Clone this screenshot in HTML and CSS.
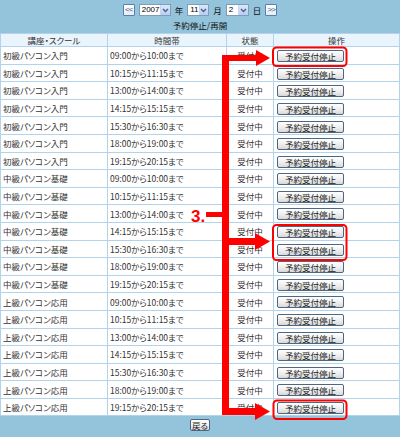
FILE: index.html
```html
<!DOCTYPE html>
<html lang="ja">
<head>
<meta charset="utf-8">
<title>予約停止/再開</title>
<link rel="stylesheet" href="styles.css">
</head>
<body>
<div class="page">
  <div class="nav">
    <span class="navbtn">&lt;&lt;</span>
    <span class="sel w1"><span class="val">2007</span><span class="drop"><svg width="7" height="5" viewBox="0 0 7 5"><path d="M1 1 L3.5 3.5 L6 1" fill="none" stroke="#4d6185" stroke-width="1.4"/></svg></span></span>
    <span class="lbl">年</span>
    <span class="sel w2"><span class="val">11</span><span class="drop"><svg width="7" height="5" viewBox="0 0 7 5"><path d="M1 1 L3.5 3.5 L6 1" fill="none" stroke="#4d6185" stroke-width="1.4"/></svg></span></span>
    <span class="lbl">月</span>
    <span class="sel w3"><span class="val">2</span><span class="drop"><svg width="7" height="5" viewBox="0 0 7 5"><path d="M1 1 L3.5 3.5 L6 1" fill="none" stroke="#4d6185" stroke-width="1.4"/></svg></span></span>
    <span class="lbl">日</span>
    <span class="navbtn">&gt;&gt;</span>
  </div>
  <div class="title">予約停止/再開</div>
  <table class="grid">
    <colgroup>
      <col class="c1"><col class="c2"><col class="c3"><col class="c4">
    </colgroup>
    <thead>
      <tr><th>講座・スクール</th><th>時間帯</th><th>状態</th><th>操作</th></tr>
    </thead>
    <tbody>
      <tr><td>初級パソコン入門</td><td>09:00から10:00まで</td><td class="st">受付中</td><td><span class="btn">予約受付停止</span></td></tr>
      <tr><td>初級パソコン入門</td><td>10:15から11:15まで</td><td class="st">受付中</td><td><span class="btn">予約受付停止</span></td></tr>
      <tr><td>初級パソコン入門</td><td>13:00から14:00まで</td><td class="st">受付中</td><td><span class="btn">予約受付停止</span></td></tr>
      <tr><td>初級パソコン入門</td><td>14:15から15:15まで</td><td class="st">受付中</td><td><span class="btn">予約受付停止</span></td></tr>
      <tr><td>初級パソコン入門</td><td>15:30から16:30まで</td><td class="st">受付中</td><td><span class="btn">予約受付停止</span></td></tr>
      <tr><td>初級パソコン入門</td><td>18:00から19:00まで</td><td class="st">受付中</td><td><span class="btn">予約受付停止</span></td></tr>
      <tr><td>初級パソコン入門</td><td>19:15から20:15まで</td><td class="st">受付中</td><td><span class="btn">予約受付停止</span></td></tr>
      <tr><td>中級パソコン基礎</td><td>09:00から10:00まで</td><td class="st">受付中</td><td><span class="btn">予約受付停止</span></td></tr>
      <tr><td>中級パソコン基礎</td><td>10:15から11:15まで</td><td class="st">受付中</td><td><span class="btn">予約受付停止</span></td></tr>
      <tr><td>中級パソコン基礎</td><td>13:00から14:00まで</td><td class="st">受付中</td><td><span class="btn">予約受付停止</span></td></tr>
      <tr><td>中級パソコン基礎</td><td>14:15から15:15まで</td><td class="st">受付中</td><td><span class="btn">予約受付停止</span></td></tr>
      <tr><td>中級パソコン基礎</td><td>15:30から16:30まで</td><td class="st">受付中</td><td><span class="btn">予約受付停止</span></td></tr>
      <tr><td>中級パソコン基礎</td><td>18:00から19:00まで</td><td class="st">受付中</td><td><span class="btn">予約受付停止</span></td></tr>
      <tr><td>中級パソコン基礎</td><td>19:15から20:15まで</td><td class="st">受付中</td><td><span class="btn">予約受付停止</span></td></tr>
      <tr><td>上級パソコン応用</td><td>09:00から10:00まで</td><td class="st">受付中</td><td><span class="btn">予約受付停止</span></td></tr>
      <tr><td>上級パソコン応用</td><td>10:15から11:15まで</td><td class="st">受付中</td><td><span class="btn">予約受付停止</span></td></tr>
      <tr><td>上級パソコン応用</td><td>13:00から14:00まで</td><td class="st">受付中</td><td><span class="btn">予約受付停止</span></td></tr>
      <tr><td>上級パソコン応用</td><td>14:15から15:15まで</td><td class="st">受付中</td><td><span class="btn">予約受付停止</span></td></tr>
      <tr><td>上級パソコン応用</td><td>15:30から16:30まで</td><td class="st">受付中</td><td><span class="btn">予約受付停止</span></td></tr>
      <tr><td>上級パソコン応用</td><td>18:00から19:00まで</td><td class="st">受付中</td><td><span class="btn">予約受付停止</span></td></tr>
      <tr><td>上級パソコン応用</td><td>19:15から20:15まで</td><td class="st">受付中</td><td><span class="btn">予約受付停止</span></td></tr>
    </tbody>
  </table>
  <div class="footer"><span class="btn back">戻る</span></div>

  <svg class="annot" width="400" height="437" viewBox="0 0 400 437">
    <g fill="#f00">
      <rect x="222" y="55" width="7" height="360"/>
      <rect x="222" y="55" width="36" height="6"/>
      <polygon points="256,50 270,58 256,66"/>
      <rect x="206" y="212" width="17" height="5"/>
      <rect x="228" y="238" width="29" height="7"/>
      <polygon points="255,233 270,241.5 255,250"/>
      <rect x="222" y="408" width="36" height="7"/>
      <polygon points="255,403 270,411.5 255,420"/>
      <text x="191" y="222" class="step">3.</text>
    </g>
    <g fill="none" stroke="#f00" stroke-width="2">
      <rect x="273" y="47.5" width="73.5" height="18.5" rx="3.5"/>
      <rect x="273" y="225" width="73.5" height="35" rx="3.5"/>
      <rect x="273.5" y="400.5" width="73" height="18.5" rx="3.5"/>
    </g>
  </svg>
</div>
</body>
</html>
```

FILE: styles.css
```css
html, body {
  margin: 0;
  padding: 0;
}
body {
  background: #94c3dc;
  font-family: "Noto Sans CJK JP", "Noto Sans", sans-serif;
  font-size: 8.5px;
  color: #333;
  font-feature-settings: "palt";
}
.page {
  position: relative;
  width: 400px;
  height: 437px;
}
.nav {
  display: flex;
  justify-content: center;
  align-items: center;
  gap: 4px;
  padding-top: 4px;
  height: 12px;
}
.navbtn {
  display: inline-flex;
  align-items: center;
  justify-content: center;
  width: 10px;
  height: 10px;
  border: 1px solid #5c7eab;
  border-radius: 1px;
  background: linear-gradient(#ffffff, #e4ecf6);
  color: #3b5b8c;
  font-family: "Liberation Sans", sans-serif;
  font-size: 8px;
  letter-spacing: -1px;
  line-height: 1;
}
.sel {
  display: inline-flex;
  align-items: stretch;
  height: 10px;
  border: 1px solid #7f9db9;
  background: #fff;
  font-family: "Liberation Sans", sans-serif;
  font-size: 8px;
  color: #000;
}
.sel.w1 { width: 30px; }
.sel.w2 { width: 20px; }
.sel.w3 { width: 21px; }
.val {
  flex: 1;
  padding-left: 2px;
  line-height: 10px;
}
.drop {
  width: 9px;
  display: flex;
  align-items: center;
  justify-content: center;
  background: linear-gradient(#dce8fb, #b8cdf2);
  border-left: 1px solid #c8d6ee;
}
.lbl {
  font-size: 8.5px;
  color: #111;
}
.title {
  text-align: center;
  height: 17px;
  line-height: 19px;
  font-size: 8.5px;
  color: #111;
}
.grid {
  border-collapse: collapse;
  width: 399px;
  table-layout: fixed;
  background: #fff;
}
.c1 { width: 107px; }
.c2 { width: 119px; }
.c3 { width: 47px; }
.c4 { width: 126px; }
.grid th, .grid td {
  border: 1px solid #b3d3ea;
  padding: 0;
  white-space: nowrap;
  overflow: hidden;
}
.grid th {
  background: #eaf4fc;
  font-weight: normal;
  text-align: center;
  height: 12px;
  line-height: 12px;
  color: #333;
}
.grid td {
  height: 16.6px;
  line-height: 12px;
  padding-left: 2px;
  color: #333;
}
.grid td.st {
  text-align: center;
  padding-left: 0;
}
.btn {
  display: inline-block;
  width: 65px;
  height: 10px;
  line-height: 10px;
  text-align: center;
  border: 1px solid #4f6680;
  border-radius: 2px;
  background: linear-gradient(#ffffff, #ececec 60%, #d8d8d8);
  color: #222;
  font-size: 8.5px;
  vertical-align: middle;
}
.grid td .btn {
  margin-left: 1px;
}
.footer {
  display: flex;
  justify-content: center;
  padding-top: 3px;
}
.btn.back {
  width: 18px;
}
.annot {
  position: absolute;
  left: 0;
  top: 0;
  pointer-events: none;
}
.step {
  font-family: "Liberation Sans", sans-serif;
  font-weight: bold;
  font-size: 17px;
}
```
